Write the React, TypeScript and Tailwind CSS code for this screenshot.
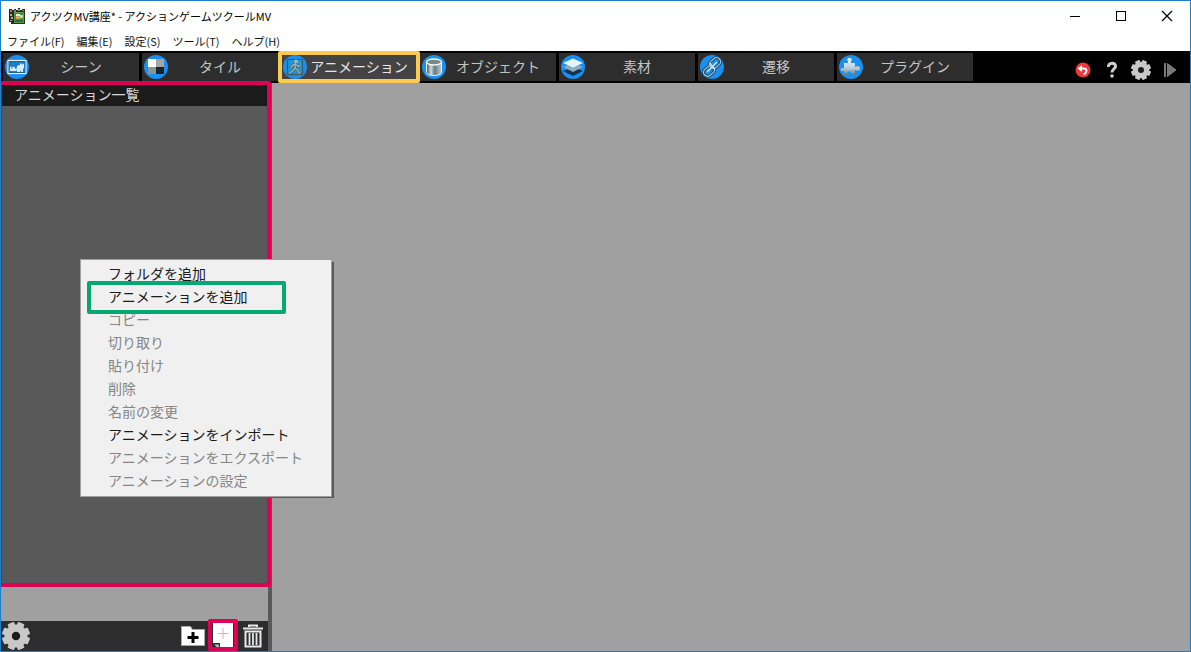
import type { ReactNode } from 'react';
import clsx from 'clsx';

interface Tab {
  label: string;
  icon: ReactNode;
  active?: boolean;
}

interface MenuEntry {
  label: string;
  disabled?: boolean;
  marked?: boolean;
}

function Badge({ children }: { children: ReactNode }) {
  return (
    <svg viewBox="0 0 24 24" className="size-6 shrink-0" aria-hidden="true">
      <circle cx="12" cy="12" r="12" fill="#1b8fee" />
      {children}
    </svg>
  );
}

const SceneIcon = () => (
  <Badge>
    <rect x="3" y="5.5" width="18" height="13" fill="#0a3358" stroke="#e8f4fb" strokeWidth="1.2" />
    <rect x="4" y="6.5" width="16" height="11" fill="#1b7fc4" />
    <path d="M5 16v-4l1.500-.5V14l1-.5v-2l2 .5 1 2h1l.5-3 2-1h1V8.500h1.500L17 10l1-1.500 1 .5v4l-1 1v3h-2v-1.500l-1 .5v1h-3V15l-1 1z" fill="#d7ecf7" />
  </Badge>
);

const TileIcon = () => (
  <Badge>
    <rect x="4" y="4" width="8" height="8" fill="#fbfbfb" />
    <rect x="12" y="4" width="8" height="8" fill="#a5a5a5" />
    <rect x="4" y="12" width="8" height="7" fill="#8a9299" />
    <rect x="12" y="12" width="8" height="7" fill="#1c2328" />
  </Badge>
);

const AnimationIcon = () => (
  <Badge>
    <rect x="4.500" y="4.500" width="15" height="15" fill="#159ce0" stroke="#44555f" strokeWidth="1.200" />
    <circle cx="13" cy="6.500" r="2" fill="#a3b0b6" />
    <path d="M12.500 8 12 13l3 2.500L16.500 19M12 13l-2.500 3L6 18.500M12.500 9 9 10.500 8 13M12.500 9l2.500 2.500 2-1" fill="none" stroke="#425e6c" strokeWidth="2.600" />
    <path d="M12.500 8 12 13l3 2.500L16.500 19M12 13l-2.500 3L6 18.500M12.500 9 9 10.500 8 13M12.500 9l2.500 2.500 2-1" fill="none" stroke="#a3b0b6" strokeWidth="1.400" />
  </Badge>
);

const ObjectIcon = () => (
  <Badge>
    <defs>
      <linearGradient id="cylinder">
        <stop offset="0" stopColor="#39525b" />
        <stop offset=".3" stopColor="#cfdadd" />
        <stop offset=".55" stopColor="#647a82" />
        <stop offset="1" stopColor="#c2cdd0" />
      </linearGradient>
    </defs>
    <path d="M4.500 7v10.500c0 4 15 4 15 0V7z" fill="url(#cylinder)" stroke="#e8f0f2" />
    <ellipse cx="12" cy="7" rx="7.500" ry="3" fill="#78878c" stroke="#f4f8f9" strokeWidth="1.300" />
  </Badge>
);

const MaterialIcon = () => (
  <Badge>
    <path d="m2 16 10-4 10 4-10 5z" fill="#11344f" />
    <path d="m2 12 10-4 10 4-10 5z" fill="#8eacbd" />
    <path d="m2 8 10-4.500L22 8l-10 4.500z" fill="#e2f4fc" />
  </Badge>
);

const TransitionIcon = () => (
  <Badge>
    <g fill="none" stroke="#17456a" strokeWidth="3">
      <rect x="9" y="4" width="12" height="8" rx="4" transform="rotate(-42 15 8)" />
      <rect x="3" y="12" width="12" height="8" rx="4" transform="rotate(-42 9 16)" />
    </g>
    <g fill="none" stroke="#a9c9da" strokeWidth="1.200">
      <rect x="9" y="4" width="12" height="8" rx="4" transform="rotate(-42 15 8)" />
      <rect x="3" y="12" width="12" height="8" rx="4" transform="rotate(-42 9 16)" />
      <path d="m7 17 10-10M10 8l5 7" stroke="#e1f0f7" />
    </g>
  </Badge>
);

const PluginIcon = () => (
  <Badge>
    <defs>
      <linearGradient id="puzzle" x2="0" y2="1">
        <stop offset="0" stopColor="#eef9ff" />
        <stop offset=".6" stopColor="#b7cfdb" />
        <stop offset="1" stopColor="#5f7887" />
      </linearGradient>
    </defs>
    <path d="M5 8h4V6.500C7.500 4.500 8.500 3 10.500 3s3 1.500 1.500 3.500V8h4v4c2.500-1.500 5-1 5 1.500s-2.500 3-5 1.500v5h-4v-2c-.5-2-3-2-3.500 0v2H5v-4c-3 1-4-1-3-2.500 1-1 2-.5 3 0z" fill="url(#puzzle)" />
  </Badge>
);

const TEETH = [0, 45, 90, 135];

const GearIcon = ({ className }: { className: string }) => (
  <svg viewBox="0 0 28 28" className={className} aria-hidden="true">
    <g fill="#c8c8c8" transform="rotate(22.500 14 14)">
      {TEETH.map((angle) => (
        <rect key={angle} x="10.500" y="0" width="7" height="28" rx="1" transform={`rotate(${angle} 14 14)`} />
      ))}
      <circle cx="14" cy="14" r="11.500" />
    </g>
    <circle cx="14" cy="14" r="4.200" fill="#1c1c1c" />
  </svg>
);

const TABS: Tab[] = [
  { label: 'シーン', icon: <SceneIcon /> },
  { label: 'タイル', icon: <TileIcon /> },
  { label: 'アニメーション', icon: <AnimationIcon />, active: true },
  { label: 'オブジェクト', icon: <ObjectIcon /> },
  { label: '素材', icon: <MaterialIcon /> },
  { label: '遷移', icon: <TransitionIcon /> },
  { label: 'プラグイン', icon: <PluginIcon /> },
];

const MENUS = ['ファイル(F)', '編集(E)', '設定(S)', 'ツール(T)', 'ヘルプ(H)'];

const CONTEXT_MENU: MenuEntry[] = [
  { label: 'フォルダを追加' },
  { label: 'アニメーションを追加', marked: true },
  { label: 'コピー', disabled: true },
  { label: '切り取り', disabled: true },
  { label: '貼り付け', disabled: true },
  { label: '削除', disabled: true },
  { label: '名前の変更', disabled: true },
  { label: 'アニメーションをインポート' },
  { label: 'アニメーションをエクスポート', disabled: true },
  { label: 'アニメーションの設定', disabled: true },
];

function TitleBar() {
  return (
    <header className="flex h-[30px] shrink-0 items-center bg-white pl-2">
      <svg viewBox="0 0 16 16" className="size-4" aria-hidden="true">
        <path d="M0 1h3v1h2V1h2v1h2V0h2v2h2V1h3v15H2v-2H0z" fill="#23301f" />
        <path d="M1 2h2v2H1zM5 2h2v2H5zM9 1h2v2H9zM13 2h2v1h-2z" fill="#7b876f" />
        <path d="M1 6h2v2H1zM2 9h2v2H2zM1 12h2v1H1z" fill="#a5b299" />
        <rect x="5.500" y="4.500" width="9" height="10" fill="#3c9440" stroke="#5d9a44" />
        <path d="M7 6h4v2H7z" fill="#f3f0cf" />
        <path d="M7 8h4v3H7z" fill="#e39a55" />
        <path d="M11 7h3v3h-3z" fill="#b9dca0" />
        <path d="M6 12h8v2H6z" fill="#2c6b2f" />
      </svg>
      <h1 className="ml-[5px] flex-1 text-[11px] text-black">アクツクMV講座* - アクションゲームツクールMV</h1>
      <button aria-label="最小化" className="flex h-full w-[46px] items-center justify-center">
        <svg viewBox="0 0 12 12" className="size-3" shapeRendering="crispEdges">
          <path d="M1 6.500h10" stroke="#000" />
        </svg>
      </button>
      <button aria-label="最大化" className="flex h-full w-[46px] items-center justify-center">
        <svg viewBox="0 0 12 12" className="size-3" shapeRendering="crispEdges">
          <path d="M1.500 1.500h9v9h-9z" fill="none" stroke="#000" />
        </svg>
      </button>
      <button aria-label="閉じる" className="flex h-full w-[46px] items-center justify-center">
        <svg viewBox="0 0 12 12" className="size-3">
          <path d="m1 1 10 10M11 1 1 11" stroke="#000" strokeWidth="1.200" />
        </svg>
      </button>
    </header>
  );
}

function Toolbar() {
  return (
    <div className="flex h-8 shrink-0 items-center justify-between bg-black pl-[2px] pr-[10px]">
      <nav className="flex gap-[3px]">
        {TABS.map((tab) => (
          <button
            key={tab.label}
            className={clsx(
              'relative flex h-7 w-[136px] items-center pl-[2px] text-sm',
              tab.active ? 'bg-[#434343] text-[#e6e6e6]' : 'bg-[#2d2d2d] text-[#c4c4c4]'
            )}
          >
            {tab.icon}
            <span className="flex-1 pr-[6px] pb-[2px] text-center">{tab.label}</span>
            {tab.active && <span className="absolute -inset-x-[3px] -inset-y-[2px] rounded-[2px] border-4 border-[#fbcb50]" />}
          </button>
        ))}
      </nav>
      <div className="flex items-center gap-2 pt-[6px]">
        <button aria-label="元に戻す" className="flex w-[22px] justify-center">
          <svg viewBox="0 0 16 16" className="size-4">
            <circle cx="8" cy="8" r="7.500" fill="#ed3939" />
            <path d="M4 6.500h4.500c4 0 4 4 0 6" fill="none" stroke="#fff" strokeWidth="1.800" />
            <path d="M2.500 6.500 7 3v7z" fill="#fff" />
          </svg>
        </button>
        <button aria-label="ヘルプ" className="flex w-5 justify-center">
          <svg viewBox="0 0 12 18" className="h-[18px] w-3">
            <path d="M2.500 6C2 1 10 1 9.500 5.500 9.500 8 6 8 6 11.500" fill="none" stroke="#cecece" strokeWidth="3" />
            <circle cx="6" cy="15" r="1.800" fill="#cecece" />
          </svg>
        </button>
        <button aria-label="設定" className="flex w-[22px] justify-center">
          <GearIcon className="size-5" />
        </button>
        <button aria-label="再生" className="flex w-5 justify-center">
          <svg viewBox="0 0 14 14" className="size-[14px]">
            <path d="M1 0h2v14H1z" fill="#777" />
            <path d="m4.500.5 8.500 6.500-8.500 6.500z" fill="#777" stroke="#999" strokeWidth=".7" />
          </svg>
        </button>
      </div>
    </div>
  );
}

function Sidebar() {
  return (
    <aside className="flex w-[271px] shrink-0 flex-col border-r-4 border-[#595959] bg-[#a0a0a0]">
      <section className="relative mb-[35px] flex-1 bg-[#595959]">
        <h2 className="h-[23px] bg-[#1b1b1b] pl-[13px] text-sm leading-[23px] text-[#d8d8d8]">アニメーション一覧</h2>
        <div className="pointer-events-none absolute -top-[2px] -right-[3px] -bottom-[1px] -left-[1px] rounded-[2px] border-4 border-l-2 border-[#de0052]" />
      </section>
      <footer className="flex h-[30px] items-center bg-[#2d2d2d]">
        <button aria-label="一覧の設定" className="pl-[1px]">
          <GearIcon className="size-7" />
        </button>
        <div className="ml-auto flex items-center">
          <button aria-label="フォルダを追加" className="flex w-[30px] justify-center">
            <svg viewBox="0 0 24 22" className="h-[22px] w-6">
              <path d="M.5 1.500h9l2 3h12v16H.5z" fill="#fff" stroke="#a9a9a9" />
              <path d="M12 7v11M6.500 12.500h11" stroke="#000" strokeWidth="3" />
            </svg>
          </button>
          <button aria-label="アニメーションを追加" className="relative flex h-[30px] w-[30px] items-center justify-center">
            <svg viewBox="0 0 20 26" className="h-[26px] w-5">
              <path d="M0 0h20v26H7v-6H0z" fill="#fff" />
              <path d="M1 21.500h5V26z" fill="#bbb" />
              <path d="M10 5v11M4.500 10.500h11" stroke="#bcbcbc" />
            </svg>
            <span className="absolute inset-x-0 -top-[2px] bottom-0 rounded-[2px] border-4 border-[#de0052]" />
          </button>
          <button aria-label="削除" className="flex w-[30px] justify-center">
            <svg viewBox="0 0 20 24" className="h-6 w-5">
              <path d="M6 3V1.500h8V3M0 4.500h20" fill="none" stroke="#e8e8e8" strokeWidth="2" />
              <path d="M2.500 7.500h15v15h-15z" fill="none" stroke="#e8e8e8" strokeWidth="2" />
              <path d="M6.500 9v12M10 9v12M13.500 9v12" stroke="#e8e8e8" strokeWidth="1.800" />
            </svg>
          </button>
        </div>
      </footer>
    </aside>
  );
}

function ContextMenu() {
  return (
    <ul className="absolute top-[258px] left-[79px] w-[252px] border border-[#a0a0a0] bg-[#f0f0f0] pt-[2px] pb-[4px] shadow-[3px_3px_0_-2px_#595959,3px_2px_0_-1px_#595959]">
      {CONTEXT_MENU.map((entry) => (
        <li key={entry.label} className="relative">
          <button
            disabled={entry.disabled}
            className={clsx(
              'block h-[23px] w-full pl-[27px] text-left text-sm leading-[23px]',
              entry.disabled ? 'text-[#858585]' : 'text-[#1a1a1a]'
            )}
          >
            {entry.label}
          </button>
          {entry.marked && (
            <span className="pointer-events-none absolute -top-[4px] right-[45px] -bottom-[6px] left-[6px] z-10 rounded-[2px] border-4 border-[#04a971]" />
          )}
        </li>
      ))}
    </ul>
  );
}

export default function App() {
  return (
    <div
      lang="ja"
      className="relative flex h-screen flex-col overflow-hidden border border-[#1b7fd0] bg-[#a0a0a0] font-['Noto_Sans_CJK_JP',sans-serif]"
    >
      <TitleBar />
      <nav className="flex h-5 shrink-0 items-center gap-3 bg-white pl-[6px] text-[11px] text-[#111]">
        {MENUS.map((menu) => (
          <button key={menu}>{menu}</button>
        ))}
      </nav>
      <Toolbar />
      <div className="flex min-h-0 flex-1">
        <Sidebar />
        <main className="flex-1 bg-[#a0a0a0]" />
      </div>
      <ContextMenu />
    </div>
  );
}
